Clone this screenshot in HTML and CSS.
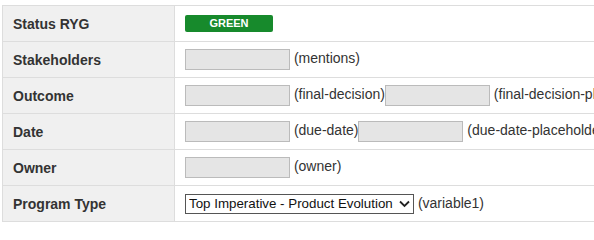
FILE: index.html
```html
<!DOCTYPE html>
<html>
<head>
<meta charset="utf-8">
<link rel="stylesheet" href="styles.css">
</head>
<body>
<table class="props">
  <tr>
    <td class="label">Status RYG</td>
    <td class="value"><span class="badge">GREEN</span></td>
  </tr>
  <tr>
    <td class="label">Stakeholders</td>
    <td class="value"><input class="field" type="text"> (mentions)</td>
  </tr>
  <tr>
    <td class="label">Outcome</td>
    <td class="value"><input class="field" type="text"> (final-decision)<input class="field" type="text"> (final-decision-placeholder)</td>
  </tr>
  <tr>
    <td class="label">Date</td>
    <td class="value"><input class="field" type="text"> (due-date)<input class="field" type="text"> (due-date-placeholder)</td>
  </tr>
  <tr>
    <td class="label">Owner</td>
    <td class="value"><input class="field" type="text"> (owner)</td>
  </tr>
  <tr>
    <td class="label">Program Type</td>
    <td class="value"><span class="select-wrap"><select class="select"><option>Top Imperative - Product Evolution</option></select><svg class="chev" width="11" height="8" viewBox="0 0 11 8"><path d="M1 1.5 L5.5 6 L10 1.5" fill="none" stroke="#222" stroke-width="1.8"/></svg></span> (variable1)</td>
  </tr>
</table>
</body>
</html>
```

FILE: styles.css
```css
html, body {
  margin: 0;
  padding: 0;
  overflow: hidden;
  background: #fff;
}

body {
  font-family: "Liberation Sans", Arial, sans-serif;
  font-size: 14px;
  color: #333;
}

.props {
  border-collapse: collapse;
  margin: 5px 0 0 2px;
  border: 1px solid #ddd;
  width: max-content;
}

.props td {
  border: 1px solid #ddd;
  height: 35px;
  padding: 0 0 0 10px;
  white-space: nowrap;
  vertical-align: middle;
}

.props td.label {
  width: 161px;
  min-width: 161px;
  background: #f0f0f0;
  font-weight: bold;
  color: #333;
}

.props td.value {
  padding-right: 12px;
}

.badge {
  display: inline-block;
  width: 88px;
  height: 17px;
  line-height: 17px;
  background: #178a2c;
  color: #fff;
  font-size: 11px;
  font-weight: bold;
  text-align: center;
  border-radius: 2px;
  vertical-align: middle;
}

.field {
  box-sizing: border-box;
  width: 105px;
  height: 21px;
  margin: 0;
  padding: 0;
  border: 1px solid #bbb;
  background: #e5e5e5;
  border-radius: 0;
  vertical-align: middle;
}

.select-wrap {
  position: relative;
  display: inline-block;
  vertical-align: middle;
}

.select {
  -webkit-appearance: none;
  appearance: none;
  box-sizing: border-box;
  width: 229px;
  height: 20px;
  margin: 0;
  padding: 0 0 0 3px;
  border: 1px solid #555;
  border-radius: 0;
  background: #fff;
  font-family: "Liberation Sans", Arial, sans-serif;
  font-size: 13.333px;
  color: #111;
  display: block;
}

.chev {
  position: absolute;
  right: 4px;
  top: 6px;
  pointer-events: none;
}
```
